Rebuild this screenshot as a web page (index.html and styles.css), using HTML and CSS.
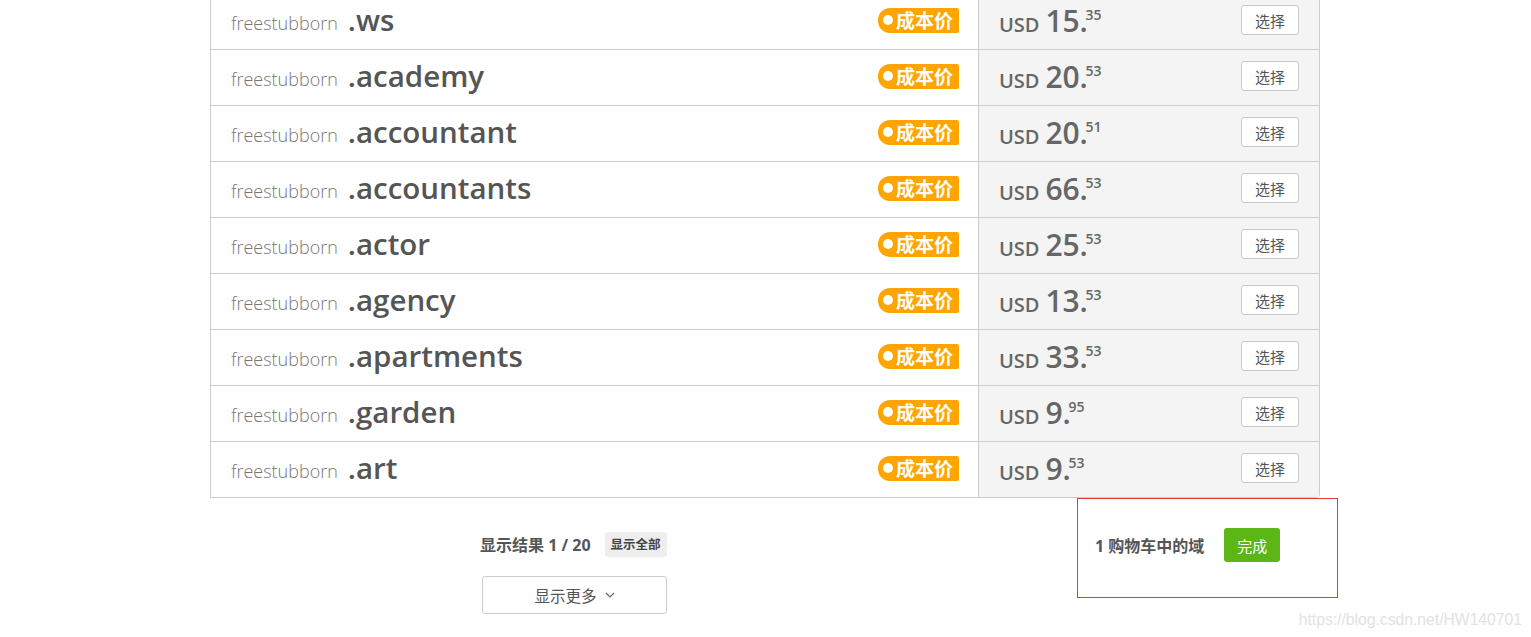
FILE: index.html
```html
<!DOCTYPE html>
<html lang="zh">
<head>
<meta charset="utf-8">
<title>Domains</title>
<link rel="stylesheet" href="styles.css">
</head>
<body>
<div class="page">
  <div class="table">
    <div class="row">
      <div class="name"><span class="sld">freestubborn</span><span class="tld">.ws</span><span class="badge"><i class="dot"></i>成本价</span></div>
      <div class="price"><span class="cur">USD</span><span class="int">15.</span><sup class="dec">35</sup><button class="pick">选择</button></div>
    </div>
    <div class="row">
      <div class="name"><span class="sld">freestubborn</span><span class="tld">.academy</span><span class="badge"><i class="dot"></i>成本价</span></div>
      <div class="price"><span class="cur">USD</span><span class="int">20.</span><sup class="dec">53</sup><button class="pick">选择</button></div>
    </div>
    <div class="row">
      <div class="name"><span class="sld">freestubborn</span><span class="tld">.accountant</span><span class="badge"><i class="dot"></i>成本价</span></div>
      <div class="price"><span class="cur">USD</span><span class="int">20.</span><sup class="dec">51</sup><button class="pick">选择</button></div>
    </div>
    <div class="row">
      <div class="name"><span class="sld">freestubborn</span><span class="tld">.accountants</span><span class="badge"><i class="dot"></i>成本价</span></div>
      <div class="price"><span class="cur">USD</span><span class="int">66.</span><sup class="dec">53</sup><button class="pick">选择</button></div>
    </div>
    <div class="row">
      <div class="name"><span class="sld">freestubborn</span><span class="tld">.actor</span><span class="badge"><i class="dot"></i>成本价</span></div>
      <div class="price"><span class="cur">USD</span><span class="int">25.</span><sup class="dec">53</sup><button class="pick">选择</button></div>
    </div>
    <div class="row">
      <div class="name"><span class="sld">freestubborn</span><span class="tld">.agency</span><span class="badge"><i class="dot"></i>成本价</span></div>
      <div class="price"><span class="cur">USD</span><span class="int">13.</span><sup class="dec">53</sup><button class="pick">选择</button></div>
    </div>
    <div class="row">
      <div class="name"><span class="sld">freestubborn</span><span class="tld">.apartments</span><span class="badge"><i class="dot"></i>成本价</span></div>
      <div class="price"><span class="cur">USD</span><span class="int">33.</span><sup class="dec">53</sup><button class="pick">选择</button></div>
    </div>
    <div class="row">
      <div class="name"><span class="sld">freestubborn</span><span class="tld">.garden</span><span class="badge"><i class="dot"></i>成本价</span></div>
      <div class="price"><span class="cur">USD</span><span class="int">9.</span><sup class="dec">95</sup><button class="pick">选择</button></div>
    </div>
    <div class="row last">
      <div class="name"><span class="sld">freestubborn</span><span class="tld">.art</span><span class="badge"><i class="dot"></i>成本价</span></div>
      <div class="price"><span class="cur">USD</span><span class="int">9.</span><sup class="dec">53</sup><button class="pick">选择</button></div>
    </div>
  </div>

  <div class="footer">
    <div class="results">
      <div class="count"><span class="count-text">显示结果 1 / 20</span><span class="tag">显示全部</span></div>
      <button class="more">显示更多<svg class="chev" width="10" height="6" viewBox="0 0 10 6"><path d="M1 1l4 4 4-4" fill="none" stroke="#666" stroke-width="1.2"/></svg></button>
    </div>
    <div class="cart">
      <span class="cart-text">1 购物车中的域</span>
      <button class="done">完成</button>
    </div>
  </div>
</div>
<div class="watermark">https://blog.csdn.net/HW140701</div>
</body>
</html>
```

FILE: styles.css
```css
* { box-sizing: border-box; }
html, body { margin: 0; padding: 0; background: #fff; }
body {
  font-family: "Open Sans", "Noto Sans CJK SC", sans-serif;
  color: #555;
  overflow: hidden;
  height: 637px;
  position: relative;
}
.page { padding-left: 210px; }

.table {
  width: 1110px;
  margin-top: -6px;
  border-left: 1px solid #ccc;
  border-right: 1px solid #ccc;
  border-bottom-right-radius: 4px;
  overflow: hidden;
}
.row {
  display: flex;
  height: 56px;
  border-bottom: 1px solid #ccc;
}
.name {
  width: 768px;
  border-right: 1px solid #ccc;
  display: flex;
  align-items: center;
  padding-left: 20px;
  padding-right: 19px;
  background: #fff;
}
.sld {
  font-size: 18px;
  font-weight: 300;
  color: #777;
  margin-right: 10px;
  position: relative;
  top: 1px;
}
.tld {
  font-size: 29.5px;
  font-weight: 600;
  color: #555;
  position: relative;
  top: -2px;
}
.badge {
  margin-left: auto;
  display: flex;
  align-items: center;
  height: 25px;
  width: 81px;
  background: #ffa500;
  color: #fff;
  font-weight: 700;
  font-size: 19px;
  border-radius: 12px 2px 2px 12px;
  padding-left: 5px;
  margin-top: -3px;
}
.dot {
  width: 10px;
  height: 10px;
  border-radius: 50%;
  background: #fff;
  margin-right: 3px;
}
.price {
  flex: 1;
  background: #f4f4f4;
  display: flex;
  align-items: center;
  padding-left: 20px;
  padding-right: 20px;
}
.cur {
  font-size: 20px;
  font-weight: 600;
  color: #666;
  margin-right: 6px;
  position: relative;
  top: 3px;
}
.int {
  font-size: 30px;
  font-weight: 600;
  color: #666;
  position: relative;
  top: -1px;
  letter-spacing: -0.2px;
}
.dec {
  font-size: 14px;
  font-weight: 600;
  color: #666;
  position: relative;
  top: -7px;
  margin-left: -2px;
  vertical-align: baseline;
}
.pick {
  margin-left: auto;
  width: 58px;
  height: 30px;
  background: #fff;
  border: 1px solid #ccc;
  border-radius: 3px;
  font-family: "Open Sans", "Noto Sans CJK SC", sans-serif;
  font-size: 15px;
  color: #555;
  padding: 0;
  margin-top: -3px;
}

.footer {
  display: flex;
}
.results {
  width: 867px;
  padding-left: 270px;
  padding-top: 33px;
}
.count {
  display: flex;
  align-items: center;
  height: 26px;
}
.count-text {
  font-size: 16px;
  font-weight: 700;
  color: #555;
}
.tag {
  margin-left: 14px;
  background: #eee;
  border-radius: 3px;
  font-size: 12.5px;
  font-weight: 700;
  color: #444;
  padding: 0 6px;
  height: 25px;
  line-height: 25px;
}
.more {
  margin-top: 19px;
  margin-left: 2px;
  width: 185px;
  height: 38px;
  background: #fff;
  border: 1px solid #ccc;
  border-radius: 3px;
  font-family: "Open Sans", "Noto Sans CJK SC", sans-serif;
  font-size: 15.5px;
  color: #555;
  display: flex;
  align-items: center;
  justify-content: center;
}
.chev { margin-left: 8px; }

.cart {
  width: 261px;
  height: 100px;
  margin-top: 0;
  border: 1px solid #e53935;
  display: flex;
  align-items: center;
  padding-left: 17px;
  padding-bottom: 6px;
}
.cart-text {
  font-size: 16px;
  font-weight: 700;
  color: #555;
}
.done {
  margin-left: 20px;
  width: 56px;
  height: 34px;
  background: #5cb615;
  border: none;
  border-radius: 3px;
  color: #fff;
  font-family: "Open Sans", "Noto Sans CJK SC", sans-serif;
  font-size: 15px;
  padding: 0;
}

.watermark {
  position: absolute;
  right: 9px;
  bottom: 8px;
  font-family: "Liberation Sans", Arial, sans-serif;
  font-size: 15.7px;
  color: #e2e2e2;
}
```
